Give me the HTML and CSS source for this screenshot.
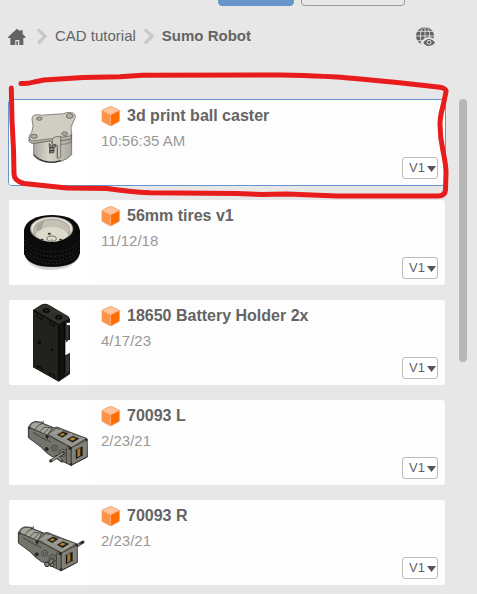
FILE: index.html
```html
<!DOCTYPE html>
<html lang="en">
<head>
<meta charset="utf-8">
<title>Sumo Robot</title>
<link rel="stylesheet" href="styles.css">
</head>
<body>
<svg class="defs" aria-hidden="true">
  <symbol id="cube" viewBox="303 123 57 60">
    <path fill="#ffc49b" d="M332 123l26 13-26 13-26-13z"/>
    <path fill="#ff9447" d="M306 136l26 13v34l-26-14z"/>
    <path fill="#ff6d00" d="M358 136l-26 13v34l26-14z"/>
    <path fill="none" stroke="#e9945b" stroke-width="2" d="M306 136l26-13 26 13v33l-26 14-26-14z"/>
    <path fill="none" stroke="#ffb27a" stroke-width="2" d="M307 137l25 12 25-12M332 149v32"/>
  </symbol>
  <symbol id="arrow" viewBox="0 0 9 6"><path fill="#555" d="M0 0h9L4.500 6z"/></symbol>
  <symbol id="chevron" viewBox="108 84 36 51"><path fill="none" stroke="#c8c8c8" stroke-width="10" d="M114 88l21 21-21 21"/></symbol>
</svg>

<div class="toolbar">
  <button class="btn btn-primary" aria-label="Upload"></button>
  <button class="btn" aria-label="New folder"></button>
</div>

<header class="header">
  <nav class="crumbs" aria-label="Breadcrumb">
    <a href="#" aria-label="Home"><svg class="home" viewBox="24 84 54 54"><path fill="#646464" d="M51 86l9 8v-3h8v11l9 9-2 3h-5v21H58v-15H46v15H31v-21h-6l-1-3z"/><path fill="#646464" d="M49 124h5v11h-5z"/></svg></a>
    <svg class="chevron"><use href="#chevron"/></svg>
    <a href="#">CAD tutorial</a>
    <svg class="chevron"><use href="#chevron"/></svg>
    <strong>Sumo Robot</strong>
  </nav>
  <button class="globe" aria-label="Preview on the web">
    <svg viewBox="615 78 63 63">
      <circle cx="645" cy="108" r="27" fill="#626262"/>
      <g fill="none" stroke="#e7e7e7" stroke-width="2.500">
        <path d="M645 80v56M617 108h56M622 94h46M622 122h46"/>
        <ellipse cx="645" cy="108" rx="14" ry="28"/>
      </g>
      <path fill="#e7e7e7" d="M631 128q11-16 26-16 16 0 24 16-8 14-24 14-17 0-26-14z"/>
      <path fill="#626262" d="M640 128q7-11 17-11t18 11q-8 10-18 10t-17-10z"/>
      <circle cx="657" cy="127" r="7" fill="#e7e7e7"/>
      <circle cx="657" cy="127" r="4" fill="#555"/>
    </svg>
  </button>
</header>

<main class="content">
  <ul class="files">
    <li class="card selected">
      <svg class="thumb" viewBox="27 105 255 255">
        <defs><linearGradient id="drum"><stop offset="0" stop-color="#aaa79e"/><stop offset=".4" stop-color="#d8d5ca"/><stop offset="1" stop-color="#aaa79d"/></linearGradient></defs>
        <path fill="url(#drum)" stroke="#55534e" stroke-width="2" d="M101 225v46q10 16 40 21 50 4 74-23v-60z"/>
        <path fill="none" stroke="#111" stroke-width="3" d="M102 269q12 17 43 22 18 3 37-4"/>
        <path fill="#b6b3a9" stroke="#44423e" stroke-width="2" d="M87 217v12q3 7 14 6l52-7 4 9 20-9 36-5 2-14"/>
        <path fill="#d0cdc2" stroke="#55534e" stroke-width="2" d="M97 158q1-10 18-9 9 3 19 1l57-4q10-6 23-3 13 1 12 14l-9 20q-6 12-3 19 4 12-5 17l-54 8-51 6q-14 2-17-9 0-7 8-16 7-20 2-32-2-6 0-12z"/>
        <g fill="#b4b1a8" stroke="#45443f" stroke-width="2"><ellipse cx="118" cy="161" rx="8" ry="5"/><ellipse cx="209" cy="153" rx="10" ry="7"/><ellipse cx="102" cy="214" rx="10" ry="6"/><ellipse cx="194" cy="206" rx="9" ry="5"/></g>
        <path fill="#c7c4b9" stroke="#55534e" stroke-width="2" d="M157 221q6-7 25-7v63q-5 5-10 2v-38l-14-1zM182 238q18 1 34-8M172 242v37"/>
        <path fill="#94928a" stroke="#222" stroke-width="2" d="M148 235l7 8 11-5v8l-4 3v13l-13 3v-16l-1-4z"/>
        <path stroke="#222" stroke-width="3" d="M149 249l12-2M149 258l12-2"/>
      </svg>
      <div class="info">
        <h2><svg class="cube"><use href="#cube"/></svg>3d print ball caster</h2>
        <p>10:56:35 AM</p>
        <div class="version"><select aria-label="Version of 3d print ball caster"><option>V1</option></select><svg class="arrow"><use href="#arrow"/></svg></div>
      </div>
      <svg class="markup" viewBox="8 70 444 132" preserveAspectRatio="none" aria-hidden="true">
        <path d="M21 83.500Q28 84 34 82L44 80 83 77.400 120 76.800 142 75.300 280 75Q330 76 355 78.500L397 82.500 438 87Q447 88 446 92L443 106Q440 117 440 124 440 138 443 151 446 165 446 173L445.500 190Q445 196 438 196H337L287 194 262 194.500 237 193.500 150 192.800Q130 192 107 188.500L67 188 24 183.500Q14 181 14 174L13.500 150 12 120 11.300 88"/>
      </svg>
    </li>
    <li class="card">
      <svg class="thumb" viewBox="27 30 255 255">
        <path fill="#d5d1d7" d="M73 185q5 54 81 55 78-2 86-53z"/>
        <path fill="#0b0b0b" d="M72 120q9-44 87-45 74 2 81 47v65q-5 42-82 44-74 0-86-40z"/>
        <g fill="none" stroke="#353535" stroke-width="3" stroke-dasharray="4 7"><path d="M76 150q20 34 80 36 62-2 82-34M75 163q23 34 81 36 60-1 83-34M77 177q21 33 79 35 59-1 81-33M78 190q23 29 78 31 55-2 80-29"/></g>
        <ellipse cx="155" cy="117" rx="65" ry="37" fill="#8a8880"/>
        <ellipse cx="155" cy="116" rx="62" ry="34" fill="#e5e2d9"/>
        <ellipse cx="155" cy="121" rx="56" ry="35" fill="#aaa69d"/>
        <path fill="#c4c0b5" d="M101 120q8-28 54-31 44 2 55 31l-12 16H110z"/>
        <path fill="#a5a298" d="M106 121q5-22 26-28l-9 29z"/>
        <path fill="#dedacb" d="M105 135q18-24 50-25 34 0 52 25-19 20-51 20-32-1-51-20z"/>
        <ellipse cx="155" cy="146" rx="14" ry="8" fill="#dedacb" stroke="#716d65" stroke-width="3"/>
        <g fill="#36342f"><ellipse cx="148" cy="131" rx="5" ry="3"/><ellipse cx="126" cy="149" rx="5" ry="3"/><ellipse cx="182" cy="149" rx="5" ry="3"/></g>
        <path stroke="#8a867b" stroke-width="3" d="M155 147v9"/>
      </svg>
      <div class="info">
        <h2><svg class="cube"><use href="#cube"/></svg>56mm tires v1</h2>
        <p>11/12/18</p>
        <div class="version"><select aria-label="Version of 56mm tires v1"><option>V1</option></select><svg class="arrow"><use href="#arrow"/></svg></div>
      </div>
    </li>
    <li class="card">
      <svg class="thumb" viewBox="27 30 255 255">
        <path fill="#171714" d="M99 60l24-16q12-5 23 0l59 35 5 8v165l-34 23-77-43z"/>
        <path fill="#22221d" d="M100 62l75 42v169l-75-41z"/>
        <path fill="#31302b" d="M102 59l23-14q10-4 20 0l60 36q4 5-2 9l-27 13z"/>
        <path fill="#fff" d="M211 150h-15v46l15-8zM200 98h11v8h-11z"/>
        <path fill="#11110f" d="M177 106l18-10v159l-18 18z"/>
        <path fill="#353530" d="M197 104l9 2v44l-9 8zM197 200l11-9v52l-11 12z"/>
        <g fill="#080807" stroke="#050505" stroke-width="2"><ellipse cx="139" cy="62" rx="10" ry="6"/><ellipse cx="176" cy="82" rx="10" ry="6"/><circle cx="118" cy="157" r="4"/><circle cx="156" cy="179" r="3"/></g>
        <g fill="#44433c"><ellipse cx="139" cy="62" rx="4" ry="2"/><ellipse cx="176" cy="82" rx="4" ry="2"/></g>
        <path fill="none" stroke="#060606" stroke-width="3" d="M101 61l75 43v168M112 71v10l14 8v-10M149 92v9l13 8v-9M112 236v-8l14 7v8M149 257v-8l14 7v8M183 101l23-12M193 99v150"/>
      </svg>
      <div class="info">
        <h2><svg class="cube"><use href="#cube"/></svg>18650 Battery Holder 2x</h2>
        <p>4/17/23</p>
        <div class="version"><select aria-label="Version of 18650 Battery Holder 2x"><option>V1</option></select><svg class="arrow"><use href="#arrow"/></svg></div>
      </div>
    </li>
    <li class="card">
      <svg class="thumb" viewBox="27 15 255 255">
        <defs>
          <g id="gearbox" stroke="#2a2a26" stroke-width="2" stroke-linejoin="round">
            <path fill="#84837b" d="M85 96l9-12q10-8 25-3l42 17 11-2 88 35 2 54-48 25-61-28-15-10-15-16-38-29z"/>
            <path fill="#a6a59c" d="M88 97l7-12q10-7 23-3l39 15-15 25z"/>
            <path fill="#96958d" d="M143 118l25-19 92 31-46 28z"/>
            <path fill="#74736c" d="M86 97l57 24 71 37v54l-61-29-18-14-14-15-35-25z"/>
            <path fill="#83827a" d="M214 158l48-24v52l-48 25z"/>
            <path fill="none" d="M105 104l9-12 16-8M119 111l13-15 28 3M132 116l14-16M122 80l8 3v-6M142 120v14l12 9M206 151l-7 11v43"/>
            <path fill="#171713" d="M172 119l17-9 15 6-17 11zM202 133l17-9 17 7-18 11z"/>
            <path fill="#b6852b" stroke="none" d="M178 119l11-5 7 4-10 5zM208 132l11-5 9 4-11 6z"/>
            <path fill="none" stroke="#aaa79d" stroke-width="3" d="M191 130l25-15M219 146l27-14M161 115l26-12"/>
            <path fill="#171713" d="M226 166l21-11v28l-21 11z"/>
            <path fill="#aa7728" stroke="none" d="M232 163l9-4v23l-9 5z"/>
            <path fill="none" stroke="#a1a098" d="M226 166v28l20-10"/>
            <g fill="#85847d"><circle cx="164" cy="159" r="9"/><circle cx="164" cy="159" r="4"/><circle cx="188" cy="174" r="11"/><circle cx="188" cy="174" r="5"/></g>
            <g fill="#252520"><circle cx="141" cy="125" r="4"/><circle cx="140" cy="162" r="5"/><circle cx="211" cy="160" r="4"/><circle cx="213" cy="207" r="3"/><circle cx="89" cy="99" r="2"/><circle cx="259" cy="134" r="3"/></g>
            <path fill="none" d="M212 211l49-25M99 112l42 25"/>
          </g>
        </defs>
        <use href="#gearbox"/>
        <path fill="none" stroke="#2c2c28" stroke-width="9" stroke-linecap="round" d="M152 198l38-23M170 184l15 14"/>
        <path fill="none" stroke="#96958d" stroke-width="5" stroke-linecap="round" d="M157 195l31-20M173 186l10 9"/>
      </svg>
      <div class="info">
        <h2><svg class="cube"><use href="#cube"/></svg>70093 L</h2>
        <p>2/23/21</p>
        <div class="version"><select aria-label="Version of 70093 L"><option>V1</option></select><svg class="arrow"><use href="#arrow"/></svg></div>
      </div>
    </li>
    <li class="card">
      <svg class="thumb" viewBox="27 15 255 255">
        <path stroke="#272723" stroke-width="9" stroke-linecap="round" d="M222 158l27-17"/>
        <path stroke="#85847d" stroke-width="5" d="M224 157l18-11"/>
        <use href="#gearbox" x="-30" y="16"/>
        <g fill="#85847d" stroke="#272723" stroke-width="3"><circle cx="141" cy="208" r="7"/><circle cx="156" cy="209" r="6"/><path d="M144 202l12-12 7 5-11 13z"/></g>
      </svg>
      <div class="info">
        <h2><svg class="cube"><use href="#cube"/></svg>70093 R</h2>
        <p>2/23/21</p>
        <div class="version"><select aria-label="Version of 70093 R"><option>V1</option></select><svg class="arrow"><use href="#arrow"/></svg></div>
      </div>
    </li>
  </ul>
  <div class="scroll-track"><div class="scroll-thumb"></div></div>
</main>
</body>
</html>
```
FILE: styles.css
```css
* {
  box-sizing: border-box;
}

body {
  margin: 0;
  min-height: 100vh;
  background: #e7e7e7;
  color: #646464;
  font: 15px/20px "Liberation Sans", Arial, sans-serif;
}

svg {
  display: block;
  flex: none;
}

.defs {
  position: absolute;
  width: 0;
  height: 0;
}

/* The toolbar is scrolled almost out of view. */
.toolbar {
  display: flex;
  justify-content: flex-end;
  gap: 7px;
  height: 32px;
  margin-top: -26px;
  padding-right: 72px;
}

.btn {
  width: 104px;
  border: 1px solid #999;
  border-radius: 4px;
  background: #e8e8e8;
}

.btn-primary {
  width: 76px;
  border-color: #6996ca;
  background: #6996ca;
}

.header {
  display: flex;
  align-items: center;
  justify-content: space-between;
  padding: 18px 41px 51px 8px;
}

.crumbs {
  display: flex;
  align-items: center;
  height: 24px;
}

.crumbs a {
  color: inherit;
  text-decoration: none;
}

.home {
  width: 18px;
  height: 18px;
  margin-top: 2px;
}

.chevron {
  width: 12px;
  height: 17px;
  margin: 0 7px;
}

.crumbs a:first-child {
  margin-right: 3px;
}

.globe {
  padding: 0;
  border: 0;
  background: none;
}

.globe svg {
  width: 21px;
  height: 21px;
}

.content {
  display: grid;
  grid-template-columns: 1fr 8px;
  gap: 13px;
  padding: 0 10px 0 8px;
}

.files {
  display: grid;
  gap: 13px;
  margin: 0;
  padding: 0;
  list-style: none;
}

.card {
  position: relative;
  display: flex;
  border: 1px solid transparent;
  border-radius: 4px;
  background: #fdfdfd;
  background-clip: padding-box;
}

.selected {
  border-color: #6695cf;
}

.thumb {
  width: 85px;
  height: 85px;
  border-radius: 3px 0 0 3px;
  background: #fff;
}

.info {
  display: flex;
  flex: 1;
  flex-direction: column;
  padding: 6px 7px;
}

.info h2 {
  display: flex;
  gap: 7px;
  margin: 0 0 5px;
  font-size: 16px;
  line-height: 20px;
}

.info p {
  margin: 0;
  color: #999;
}

.cube {
  width: 19px;
  height: 20px;
}

.version {
  position: relative;
  align-self: flex-end;
  margin-top: auto;
}

.version select {
  display: block;
  appearance: none;
  width: 36px;
  height: 22px;
  padding: 0 0 2px 6px;
  border: 1px solid #bbb;
  border-radius: 3px;
  background: #fff;
  color: #646464;
  font: 13px "Liberation Sans", Arial, sans-serif;
}

.arrow {
  position: absolute;
  top: 9px;
  right: 2px;
  width: 9px;
  height: 6px;
  pointer-events: none;
}

.markup {
  position: absolute;
  top: -30px;
  left: -1px;
  width: calc(100% + 8px);
  height: 132px;
  overflow: visible;
  pointer-events: none;
}

.markup path {
  fill: none;
  stroke: #e81c1c;
  stroke-width: 5;
  stroke-linecap: round;
  stroke-linejoin: round;
}

.scroll-thumb {
  height: 54%;
  border-radius: 4px;
  background: #b7b7b7;
}
```
